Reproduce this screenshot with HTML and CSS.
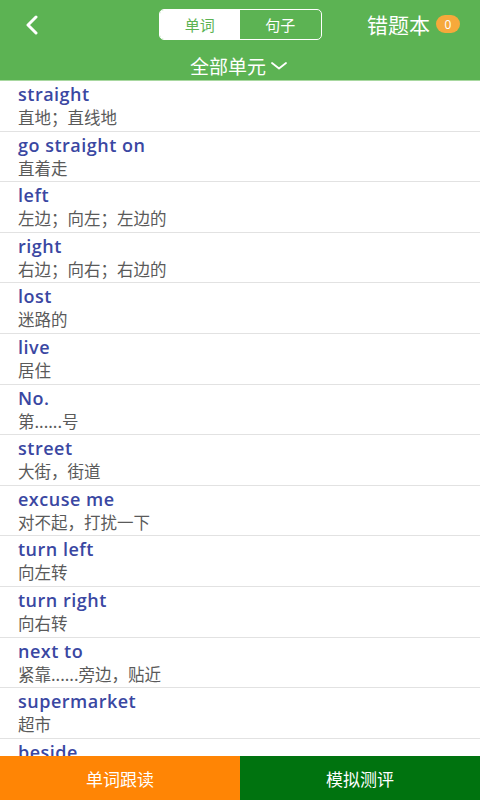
FILE: index.html
```html
<!DOCTYPE html>
<html>
<head>
<meta charset="utf-8">
<link rel="stylesheet" href="styles.css">
</head>
<body>
<div class="app">
  <header class="header">
    <div class="topbar">
      <div class="back">
        <svg width="16" height="20" viewBox="0 0 16 20"><path d="M12 2 L4 10 L12 18" fill="none" stroke="#fff" stroke-width="3" stroke-linecap="round" stroke-linejoin="round"/></svg>
      </div>
      <div class="seg">
        <div class="seg-item active">单词</div>
        <div class="seg-item">句子</div>
      </div>
      <div class="wrong">错题本<span class="badge">0</span></div>
    </div>
    <div class="unit">全部单元
      <svg width="18" height="10" viewBox="0 0 18 10"><path d="M2 2 L9 7.5 L16 2" fill="none" stroke="#fff" stroke-width="1.8" stroke-linecap="round" stroke-linejoin="round"/></svg>
    </div>
  </header>
  <main class="list">
    <div class="item"><div class="word">straight</div><div class="mean">直地；直线地</div></div>
    <div class="item"><div class="word">go straight on</div><div class="mean">直着走</div></div>
    <div class="item"><div class="word">left</div><div class="mean">左边；向左；左边的</div></div>
    <div class="item"><div class="word">right</div><div class="mean">右边；向右；右边的</div></div>
    <div class="item"><div class="word">lost</div><div class="mean">迷路的</div></div>
    <div class="item"><div class="word">live</div><div class="mean">居住</div></div>
    <div class="item"><div class="word">No.</div><div class="mean">第......号</div></div>
    <div class="item"><div class="word">street</div><div class="mean">大街，街道</div></div>
    <div class="item"><div class="word">excuse me</div><div class="mean">对不起，打扰一下</div></div>
    <div class="item"><div class="word">turn left</div><div class="mean">向左转</div></div>
    <div class="item"><div class="word">turn right</div><div class="mean">向右转</div></div>
    <div class="item"><div class="word">next to</div><div class="mean">紧靠......旁边，贴近</div></div>
    <div class="item"><div class="word">supermarket</div><div class="mean">超市</div></div>
    <div class="item"><div class="word">beside</div></div>
  </main>
  <footer class="bottom">
    <div class="btn follow">单词跟读</div>
    <div class="btn test">模拟测评</div>
  </footer>
</div>
</body>
</html>
```
FILE: styles.css
```css
* { box-sizing: border-box; }
html, body { margin: 0; padding: 0; }
body {
  width: 480px;
  height: 800px;
  overflow: hidden;
  font-family: "Open Sans", "Noto Sans CJK SC", sans-serif;
  background: #fff;
}
.app {
  display: flex;
  flex-direction: column;
  height: 800px;
}
.header {
  background: #5cb353;
  height: 81px;
  flex: none;
  color: #fff;
  border-bottom: 1px solid #a8d8a0;
}
.topbar {
  height: 50px;
  display: grid;
  grid-template-columns: 1fr 163px 1fr;
  align-items: center;
}
.back {
  padding-left: 24px;
  display: flex;
  align-items: center;
  height: 20px;
}
.back svg { display: block; }
.seg {
  display: flex;
  height: 31px;
  border: 1.5px solid #fff;
  border-radius: 5px;
  overflow: hidden;
  align-self: start;
  margin-top: 9px;
}
.seg-item {
  flex: 1;
  display: flex;
  align-items: center;
  justify-content: center;
  font-family: "Noto Sans CJK SC", sans-serif;
  font-size: 15px;
  color: #fff;
}
.seg-item.active {
  background: #fff;
  color: #5cb353;
}
.wrong {
  justify-self: end;
  padding-right: 20px;
  font-family: "Noto Sans CJK SC", sans-serif;
  font-size: 21px;
  display: flex;
  align-items: center;
  margin-top: -2px;
}
.badge {
  margin-left: 6px;
  width: 24px;
  height: 18px;
  border-radius: 9px;
  background: #f6a93b;
  font-family: "Open Sans", sans-serif;
  font-size: 12px;
  display: flex;
  align-items: center;
  justify-content: center;
  color: #fff;
}
.unit {
  display: flex;
  justify-content: center;
  align-items: center;
  gap: 4px;
  font-family: "Noto Sans CJK SC", sans-serif;
  font-size: 19px;
  height: 30px;
  margin-left: -2px;
}
.unit svg { margin-top: 2px; }
.list {
  flex: 1;
  overflow: hidden;
}
.item {
  height: 50.6px;
  border-bottom: 1px solid #e2e2e2;
  padding: 2px 0 0 18px;
}
.word {
  font-family: "Open Sans", sans-serif;
  font-weight: 600;
  font-size: 18px;
  letter-spacing: 0.5px;
  color: #3a47a2;
  line-height: 23px;
}
.mean {
  font-family: "Noto Sans CJK SC", sans-serif;
  font-size: 16.5px;
  color: #5a5a5a;
  line-height: 23px;
}
.bottom {
  height: 44px;
  flex: none;
  display: flex;
}
.btn {
  flex: 1;
  display: flex;
  align-items: center;
  justify-content: center;
  color: #fff;
  font-family: "Noto Sans CJK SC", sans-serif;
  font-size: 17px;
}
.follow { background: #ff8505; }
.test { background: #00730f; }
```
